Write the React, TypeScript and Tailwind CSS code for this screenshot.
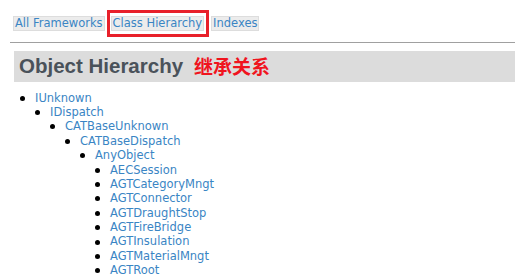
import React from 'react';

interface Node {
    name: string;
    children?: Node[];
}

const agt = ['AECSession', 'AGTCategoryMngt', 'AGTConnector', 'AGTDraughtStop', 'AGTFireBridge', 'AGTInsulation', 'AGTMaterialMngt', 'AGTRoot'];

const tree: Node = {
    name: 'IUnknown',
    children: [{
        name: 'IDispatch',
        children: [{
            name: 'CATBaseUnknown',
            children: [{
                name: 'CATBaseDispatch',
                children: [{ name: 'AnyObject', children: agt.map((n) => ({ name: n })) }],
            }],
        }],
    }],
};

const Branch = ({ node }: { node: Node }) => (
    <li>
        <div className="flex items-center h-[14.4px]">
            <span className="w-[5px] h-[5px] rounded-full bg-black mr-[10px] ml-[20px]" />
            <a className="text-[#3a85c4] cursor-pointer">{node.name}</a>
        </div>
        {node.children && (
            <ul className="pl-[15px]">
                {node.children.map((c) => <Branch key={c.name} node={c} />)}
            </ul>
        )}
    </li>
);

export default function App() {
    return (
        <div className="w-[515px] h-[276px] overflow-hidden bg-white" style={{ fontFamily: '"DejaVu Sans", Verdana, sans-serif' }}>
            {/* top nav */}
            <div className="flex items-center pl-[13px] pt-[10px] text-[11.5px]">
                <a className="px-px bg-[#ececec] border border-[#dddddd] text-[#3a85c4] leading-[13px]">All Frameworks</a>
                <div className="ml-[2px] border-[3px] border-[#e8202a] pl-px pr-[2px] py-[3px]">
                    <a className="block px-px bg-[#ececec] border border-[#dddddd] text-[#3a85c4] leading-[13px]">Class Hierarchy</a>
                </div>
                <a className="ml-[2px] px-px bg-[#ececec] border border-[#dddddd] text-[#3a85c4] leading-[13px]">Indexes</a>
            </div>
            <hr className="mt-[5px] ml-[10px] border-0 border-t border-[#a0a0a0]" />

            {/* title */}
            <div className="mt-[8px] ml-[14px] h-[31px] bg-[#dcdcdc] flex items-center pl-[5px]">
                <span className="text-[20.5px] font-bold text-[#4a525a]" style={{ fontFamily: '"Liberation Sans", Arial, sans-serif' }}>Object Hierarchy</span>
                <span className="ml-[11px] text-[19px] font-bold text-[#f0141e]" style={{ fontFamily: '"Noto Sans CJK SC", sans-serif' }}>继承关系</span>
            </div>

            <ul className="mt-[9px] text-[11.5px]">
                <Branch node={tree} />
            </ul>
        </div>
    );
}
